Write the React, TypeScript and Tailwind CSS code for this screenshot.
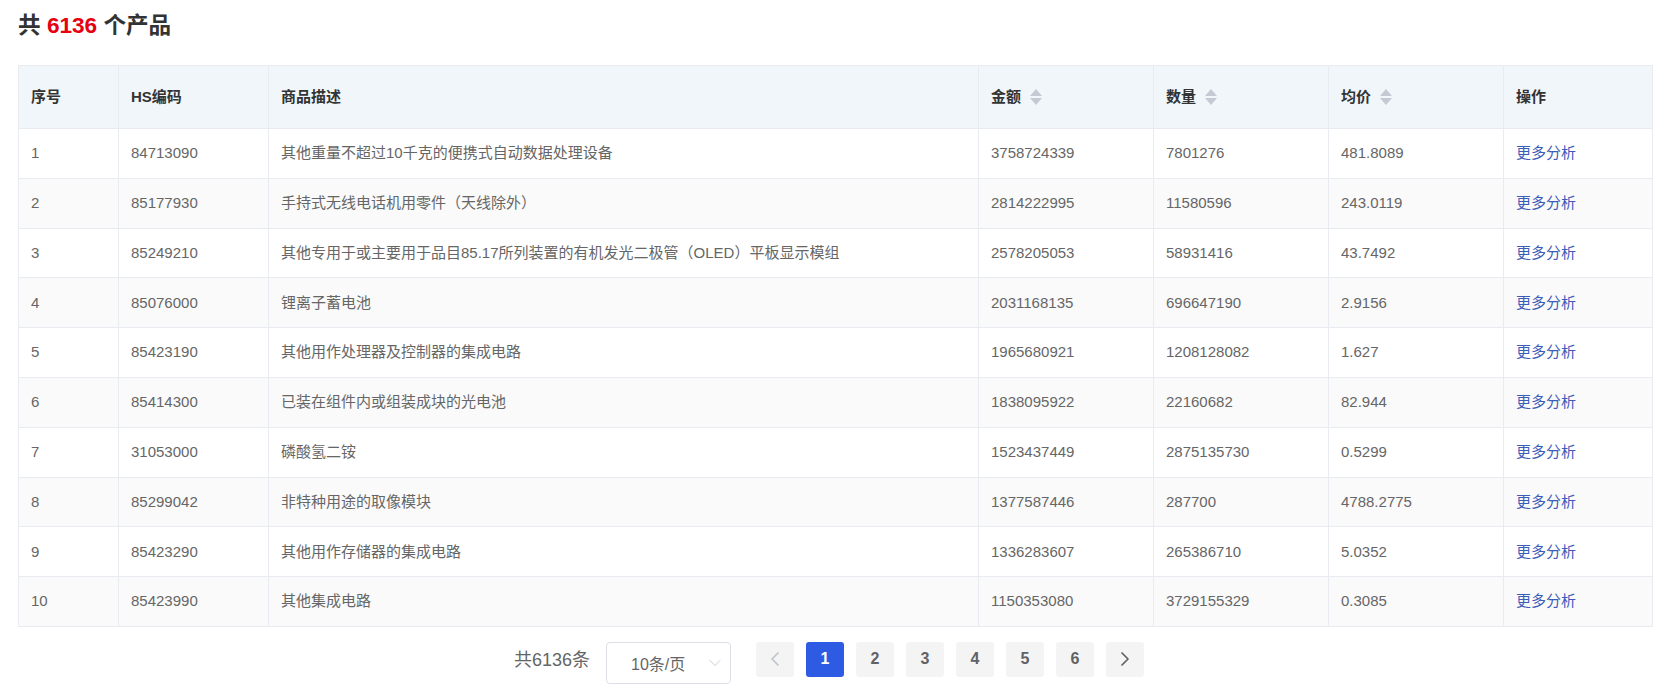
import { ChevronDown, ChevronLeft, ChevronRight } from 'lucide-react';

const rows = [
    ['84713090', '其他重量不超过10千克的便携式自动数据处理设备', '3758724339', '7801276', '481.8089'],
    ['85177930', '手持式无线电话机用零件（天线除外）', '2814222995', '11580596', '243.0119'],
    ['85249210', '其他专用于或主要用于品目85.17所列装置的有机发光二极管（OLED）平板显示模组', '2578205053', '58931416', '43.7492'],
    ['85076000', '锂离子蓄电池', '2031168135', '696647190', '2.9156'],
    ['85423190', '其他用作处理器及控制器的集成电路', '1965680921', '1208128082', '1.627'],
    ['85414300', '已装在组件内或组装成块的光电池', '1838095922', '22160682', '82.944'],
    ['31053000', '磷酸氢二铵', '1523437449', '2875135730', '0.5299'],
    ['85299042', '非特种用途的取像模块', '1377587446', '287700', '4788.2775'],
    ['85423290', '其他用作存储器的集成电路', '1336283607', '265386710', '5.0352'],
    ['85423990', '其他集成电路', '1150353080', '3729155329', '0.3085'],
];

function SortIcon() {
    return (
        <svg width="12" height="16" viewBox="0 0 12 16" className="ml-[9px] shrink-0">
            <path d="M6 0 L12 7 H0 Z" fill="#c5c9d3" />
            <path d="M0 9 H12 L6 16 Z" fill="#c5c9d3" />
        </svg>
    );
}

const th = 'border border-[#e8ecf1] pl-[12px] pr-3 text-left align-middle text-[15px] font-bold text-[#333]';
const td = 'border border-[#e8ecf1] pl-[12px] pr-3 align-middle text-[15px] text-[#666]';

export default function App() {
    return (
        <div className="h-[695px] w-[1671px] overflow-hidden bg-white font-['Liberation_Sans','Noto_Sans_CJK_SC',sans-serif]">
            <h2 className="pl-[18px] pt-[12px] text-[22.6px] font-bold leading-[28px] text-[#333]">
                共 <span className="text-[#e60012]">6136</span> 个产品
            </h2>
            <div className="ml-[18px] mt-[25px] w-[1634px]">
                <table className="w-full table-fixed border-collapse">
                    <colgroup>
                        <col className="w-[100px]" />
                        <col className="w-[150px]" />
                        <col className="w-[710px]" />
                        <col className="w-[175px]" />
                        <col className="w-[175px]" />
                        <col className="w-[175px]" />
                        <col className="w-[149px]" />
                    </colgroup>
                    <thead>
                        <tr className="h-[63px] bg-[#f1f6fb]">
                            <th className={th}>序号</th>
                            <th className={th}>HS编码</th>
                            <th className={th}>商品描述</th>
                            <th className={th}><div className="flex items-center">金额<SortIcon /></div></th>
                            <th className={th}><div className="flex items-center">数量<SortIcon /></div></th>
                            <th className={th}><div className="flex items-center">均价<SortIcon /></div></th>
                            <th className={th}>操作</th>
                        </tr>
                    </thead>
                    <tbody>
                        {rows.map((r, i) => (
                            <tr key={r[0]} className={`h-[49.8px] ${i % 2 === 1 ? 'bg-[#fafafa]' : 'bg-white'}`}>
                                <td className={td}>{i + 1}</td>
                                {r.map((c, j) => <td key={j} className={td}>{c}</td>)}
                                <td className={`${td} !text-[#3b5cb8]`}>更多分析</td>
                            </tr>
                        ))}
                    </tbody>
                </table>
            </div>
            <div className="mt-[15px] flex items-start pl-[514px]">
                <span className="mt-[6px] text-[18px] leading-[24px] text-[#666]">共6136条</span>
                <div className="ml-[16px] flex h-[42px] w-[125px] items-center justify-between rounded border border-[#dcdfe6] pl-[24px] pr-[5px] text-[16px] text-[#666]">
                    <span className="pt-[4px]">10条/页</span>
                    <ChevronDown size={20} strokeWidth={1} className="text-[#c0c4cc]" />
                </div>
                <div className="ml-[25px] flex gap-[12px]">
                    <div className="flex h-[35px] w-[38px] items-center justify-center rounded-[3px] bg-[#f4f4f5] text-[#c0c4cc]"><ChevronLeft size={24} strokeWidth={1.75} /></div>
                    {[1, 2, 3, 4, 5, 6].map(n => (
                        <div key={n} className={`flex h-[35px] w-[38px] items-center justify-center rounded-[3px] text-[16px] font-bold ${n === 1 ? 'bg-[#2d5be3] text-white' : 'bg-[#f4f4f5] text-[#606266]'}`}>{n}</div>
                    ))}
                    <div className="flex h-[35px] w-[38px] items-center justify-center rounded-[3px] bg-[#f4f4f5] text-[#606266]"><ChevronRight size={24} strokeWidth={1.75} /></div>
                </div>
            </div>
        </div>
    );
}
